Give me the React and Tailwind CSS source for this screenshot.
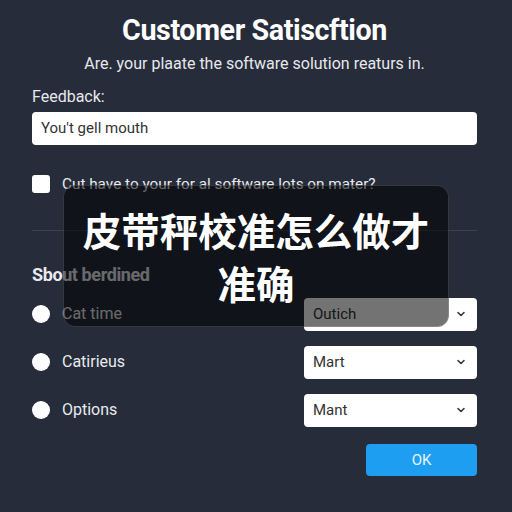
import React from 'react';

const Chevron = () => (
  <svg width="12" height="12" viewBox="0 0 24 24" fill="none" stroke="#333" strokeWidth="3" strokeLinecap="round" strokeLinejoin="round">
    <path d="M6 9l6 6 6-6" />
  </svg>
);

const SelectBox = ({ value }) => (
  <div className="flex h-[33px] w-[173px] items-center justify-between rounded-[4px] bg-white pl-[9px] pr-[10px] text-[15px] text-[#333]">
    <span>{value}</span>
    <Chevron />
  </div>
);

const OptionRow = ({ label, value }) => (
  <div className="flex h-[33px] items-center justify-between">
    <div className="flex items-center gap-[12px]">
      <div className="h-[18px] w-[18px] rounded-full bg-white" />
      <span className="text-[16px] text-[#e8eaee]">{label}</span>
    </div>
    <SelectBox value={value} />
  </div>
);

export default function App() {
  return (
    <div
      className="relative h-[512px] w-[512px] overflow-hidden bg-[#262c3a] text-white"
      style={{ fontFamily: 'Roboto, "Noto Sans CJK SC", sans-serif' }}
    >
      <div className="flex flex-col pl-[32px] pr-[35px] pt-[11px]">
        <h1 className="text-center text-[28.7px] font-bold leading-[38px] tracking-[-0.4px]">Customer Satiscftion</h1>
        <p className="mt-[5px] text-center text-[16px] leading-[20px] text-[#e6e8ec]">
          Are. your plaate the software solution reaturs in.
        </p>
        <label className="mt-[12px] text-[16px] leading-[22px] text-[#e6e8ec]">Feedback:</label>
        <div className="mt-[4px] flex h-[33px] items-center rounded-[4px] bg-white px-[9px] text-[15px] text-[#333]">
          You't gell mouth
        </div>
        <div className="mt-[28px] flex items-center gap-[12px]">
          <div className="h-[18px] w-[18px] rounded-[3px] bg-white" />
          <span className="text-[15.3px] text-[#e8eaee]">Cut have to your for al software lots on mater?</span>
        </div>
        <div className="mt-[34px] h-px bg-white/10" />
        <h2 className="mt-[33px] text-[18px] font-bold leading-[22px] tracking-[-0.4px] text-[#e8eaee]">Sbout berdined</h2>
        <div className="mt-[12px] flex flex-col gap-[15px]">
          <OptionRow label="Cat time" value="Outich" />
          <OptionRow label="Catirieus" value="Mart" />
          <OptionRow label="Options" value="Mant" />
        </div>
        <div className="mt-[17px] flex justify-end">
          <button className="h-[32px] w-[111px] rounded-[4px] bg-[#1e9ef0] text-[15px] text-[#e6f3ff]">OK</button>
        </div>
      </div>

      <div className="absolute left-[63px] top-[185px] flex h-[142px] w-[386px] flex-col items-center justify-center rounded-[12px] border border-white/15 bg-black/55">
        <p className="text-center text-[38.5px] font-bold leading-[53px] text-white" style={{ fontFamily: '"Noto Sans CJK SC", sans-serif' }}>
          皮带秤校准怎么做才
          <br />
          准确
        </p>
      </div>
    </div>
  );
}
